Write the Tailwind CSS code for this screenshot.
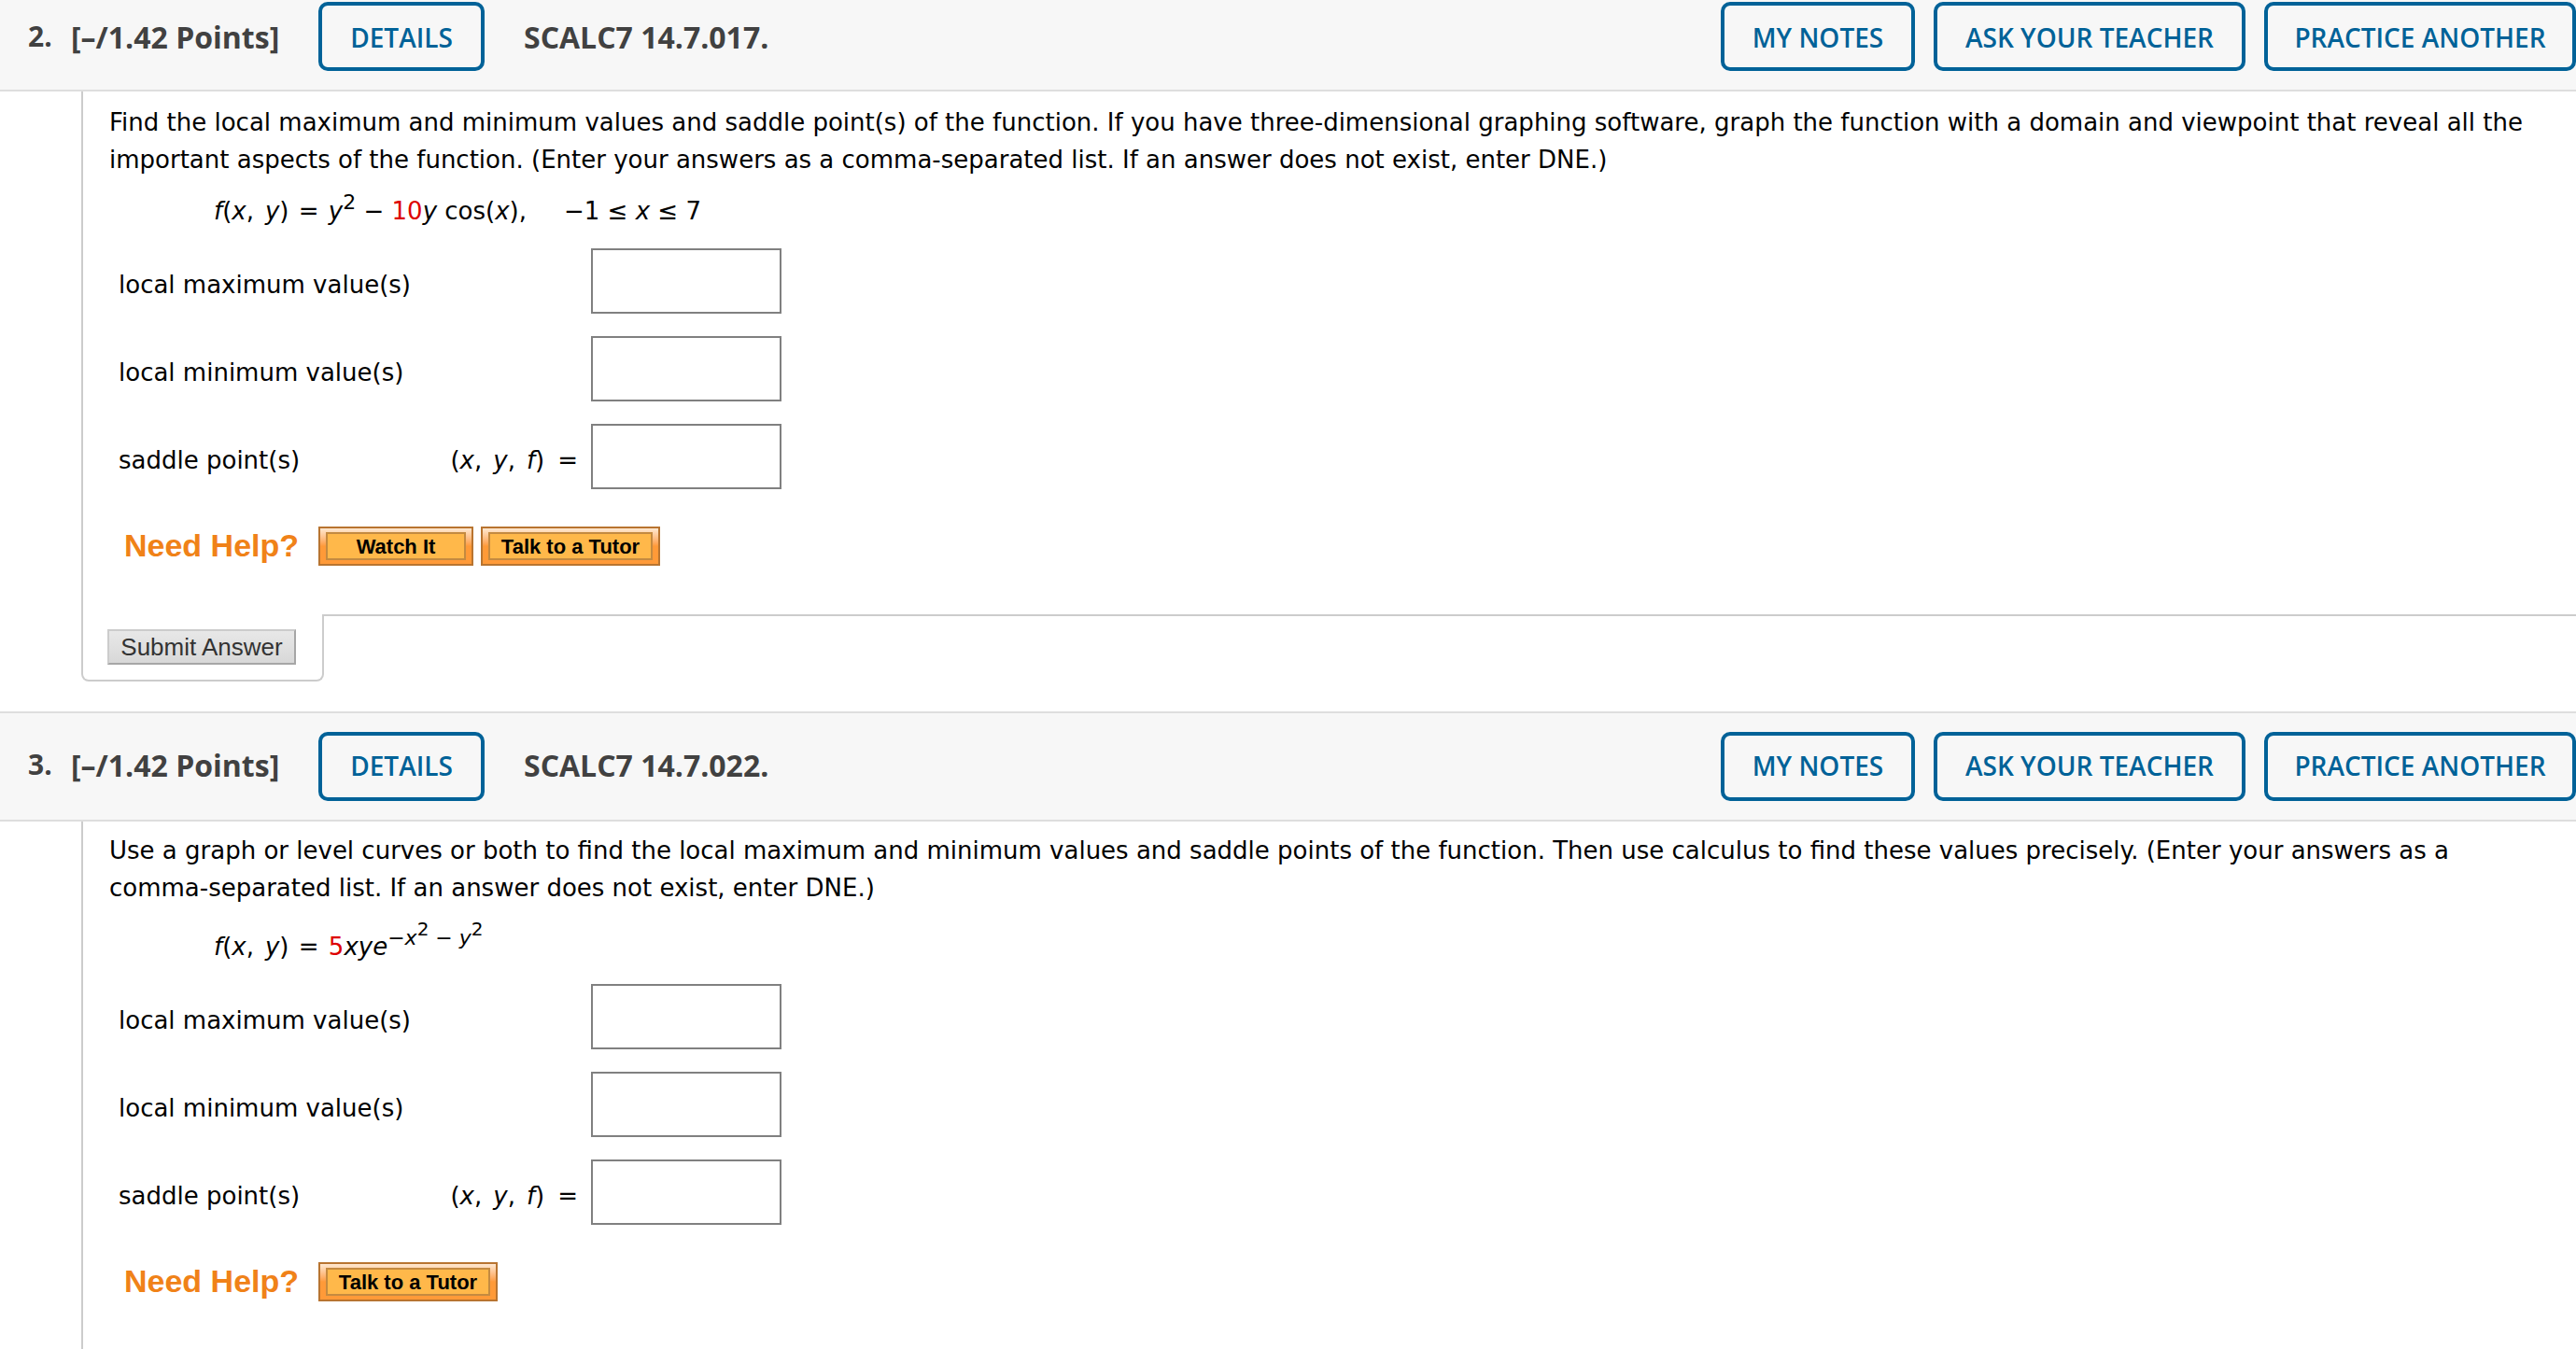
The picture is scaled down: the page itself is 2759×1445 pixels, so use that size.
<!DOCTYPE html>
<html lang="en">
<head>
<meta charset="utf-8">
<title>Homework</title>
<script src="https://cdn.jsdelivr.net/npm/@tailwindcss/browser@4"></script>
</head>
<body class="flex min-h-screen flex-col bg-white font-['Verdana','DejaVu_Sans',sans-serif] text-[26px] leading-10 text-black">

<section>
  <header class="flex items-start justify-between border-b-2 border-[#dedede] bg-[#f7f7f7] pt-[2px] pb-5 pl-[30px] font-['Open_Sans',sans-serif]">
    <div class="flex items-center text-[32px] font-bold text-[#414141]">
      <span class="w-[46px] text-[30px]">2.</span>
      <h2 class="w-[265px] pt-[2px]">[–/1.42 Points]</h2>
      <button class="h-[74px] w-[178px] rounded-[10px] border-4 border-[#006298] pt-[2px] text-[28px] font-semibold text-[#006298]">DETAILS</button>
      <span class="ml-[42px] pt-[2px]">SCALC7 14.7.017.</span>
    </div>
    <div class="flex gap-5 text-[28px] font-semibold text-[#006298]">
      <button class="h-[74px] w-[208px] rounded-[10px] border-4 border-[#006298] pt-[2px]">MY NOTES</button>
      <button class="h-[74px] w-[334px] rounded-[10px] border-4 border-[#006298] pt-[2px]">ASK YOUR TEACHER</button>
      <button class="h-[74px] w-[334px] rounded-[10px] border-4 border-[#006298] pt-[2px]">PRACTICE ANOTHER</button>
    </div>
  </header>

  <div class="ml-[87px] border-l-2 border-[#cccccc] pt-[13px] pb-[52px] pl-7">
    <p>Find the local maximum and minimum values and saddle point(s) of the function. If you have three-dimensional graphing software, graph the function with a domain and viewpoint that reveal all the<br>important aspects of the function. (Enter your answers as a comma-separated list. If an answer does not exist, enter DNE.)</p>
    <p class="mt-[15px] ml-28"><i>f</i>(<i>x</i>,<i class="ml-3">y</i>) <span class="mx-[2px]">=</span> <i>y</i><sup class="text-[22px]">2</sup> − <span class="text-[#dd0000]">10</span><i>y</i> cos(<i>x</i>),<span class="ml-10">−1</span> ≤ <i>x</i> ≤ 7</p>
    <div class="mt-5 ml-[10px] flex flex-col gap-6">
      <div class="flex h-[70px] items-center">
        <label for="max2" class="w-[506px] pt-[7px]">local maximum value(s)</label>
        <input id="max2" type="text" class="h-full w-[204px] border-2 border-[#808080] px-2">
      </div>
      <div class="flex h-[70px] items-center">
        <label for="min2" class="w-[506px] pt-[7px]">local minimum value(s)</label>
        <input id="min2" type="text" class="h-full w-[204px] border-2 border-[#808080] px-2">
      </div>
      <div class="flex h-[70px] items-center">
        <label for="saddle2" class="flex w-[506px] justify-between pt-[7px] pr-[14px]"><span>saddle point(s)</span><span>(<i>x</i>,<i class="ml-3">y</i>,<i class="ml-3">f</i>)<span class="ml-[14px]">=</span></span></label>
        <input id="saddle2" type="text" class="h-full w-[204px] border-2 border-[#808080] px-2">
      </div>
    </div>
    <div class="mt-10 ml-4 flex items-center gap-2 font-['Liberation_Sans',Arial,sans-serif] font-bold">
      <span class="w-[200px] pb-[2px] text-[34px] text-[#f08218]">Need Help?</span>
      <button class="h-[42px] w-[166px] border-2 border-[#b87430] bg-linear-to-b from-[#ffe8d0] to-[#ff9a38] to-50% px-[6px] py-1"><span class="flex h-full items-center justify-center border-2 border-[#c48a40] bg-[#ffb84a] pt-[2px] text-[22px]">Watch It</span></button>
      <button class="h-[42px] w-[192px] border-2 border-[#b87430] bg-linear-to-b from-[#ffe8d0] to-[#ff9a38] to-50% px-[6px] py-1"><span class="flex h-full items-center justify-center border-2 border-[#c48a40] bg-[#ffb84a] pt-[2px] text-[22px]">Talk to a Tutor</span></button>
    </div>
  </div>

  <div class="ml-[87px] flex">
    <div class="h-[72px] w-[260px] rounded-b-[8px] border-x-2 border-b-2 border-[#cccccc] pt-4 pl-[26px]">
      <button class="flex h-[38px] w-[202px] items-center justify-center border-2 border-t-[#cccccc] border-r-[#a6a6a6] border-b-[#a6a6a6] border-l-[#cccccc] bg-linear-to-b from-[#e8e8e8] to-[#d8d8d8] font-['Liberation_Sans',Arial,sans-serif] text-[#333333]">Submit Answer</button>
    </div>
    <div class="flex-1 border-t-2 border-[#cccccc]"></div>
  </div>
</section>

<section class="mt-8 flex flex-1 flex-col">
  <header class="flex items-start justify-between border-y-2 border-[#dedede] bg-[#f7f7f7] py-5 pl-[30px] font-['Open_Sans',sans-serif]">
    <div class="flex items-center text-[32px] font-bold text-[#414141]">
      <span class="w-[46px] pb-1 text-[30px]">3.</span>
      <h2 class="w-[265px] pb-[2px]">[–/1.42 Points]</h2>
      <button class="h-[74px] w-[178px] rounded-[10px] border-4 border-[#006298] pb-[2px] text-[28px] font-semibold text-[#006298]">DETAILS</button>
      <span class="ml-[42px] pb-[2px]">SCALC7 14.7.022.</span>
    </div>
    <div class="flex gap-5 text-[28px] font-semibold text-[#006298]">
      <button class="h-[74px] w-[208px] rounded-[10px] border-4 border-[#006298] pb-[2px]">MY NOTES</button>
      <button class="h-[74px] w-[334px] rounded-[10px] border-4 border-[#006298] pb-[2px]">ASK YOUR TEACHER</button>
      <button class="h-[74px] w-[334px] rounded-[10px] border-4 border-[#006298] pb-[2px]">PRACTICE ANOTHER</button>
    </div>
  </header>

  <div class="ml-[87px] flex-1 border-l-2 border-[#cccccc] pt-[11px] pl-7">
    <p>Use a graph or level curves or both to find the local maximum and minimum values and saddle points of the function. Then use calculus to find these values precisely. (Enter your answers as a<br>comma-separated list. If an answer does not exist, enter DNE.)</p>
    <p class="mt-[23px] ml-28"><i>f</i>(<i>x</i>,<i class="ml-3">y</i>) <span class="mx-[2px]">=</span> <span class="text-[#dd0000]">5</span><i>xye</i><sup class="text-[22px]">−<i>x</i><sup class="text-[20px]">2</sup> − <i>y</i><sup class="text-[20px]">2</sup></sup></p>
    <div class="mt-5 ml-[10px] flex flex-col gap-6">
      <div class="flex h-[70px] items-center">
        <label for="max3" class="w-[506px] pt-[7px]">local maximum value(s)</label>
        <input id="max3" type="text" class="h-full w-[204px] border-2 border-[#808080] px-2">
      </div>
      <div class="flex h-[70px] items-center">
        <label for="min3" class="w-[506px] pt-[7px]">local minimum value(s)</label>
        <input id="min3" type="text" class="h-full w-[204px] border-2 border-[#808080] px-2">
      </div>
      <div class="flex h-[70px] items-center">
        <label for="saddle3" class="flex w-[506px] justify-between pt-[7px] pr-[14px]"><span>saddle point(s)</span><span>(<i>x</i>,<i class="ml-3">y</i>,<i class="ml-3">f</i>)<span class="ml-[14px]">=</span></span></label>
        <input id="saddle3" type="text" class="h-full w-[204px] border-2 border-[#808080] px-2">
      </div>
    </div>
    <div class="mt-10 ml-4 flex items-center gap-2 font-['Liberation_Sans',Arial,sans-serif] font-bold">
      <span class="w-[200px] pb-[2px] text-[34px] text-[#f08218]">Need Help?</span>
      <button class="h-[42px] w-[192px] border-2 border-[#b87430] bg-linear-to-b from-[#ffe8d0] to-[#ff9a38] to-50% px-[6px] py-1"><span class="flex h-full items-center justify-center border-2 border-[#c48a40] bg-[#ffb84a] pt-[2px] text-[22px]">Talk to a Tutor</span></button>
    </div>
  </div>
</section>
</body>
</html>
